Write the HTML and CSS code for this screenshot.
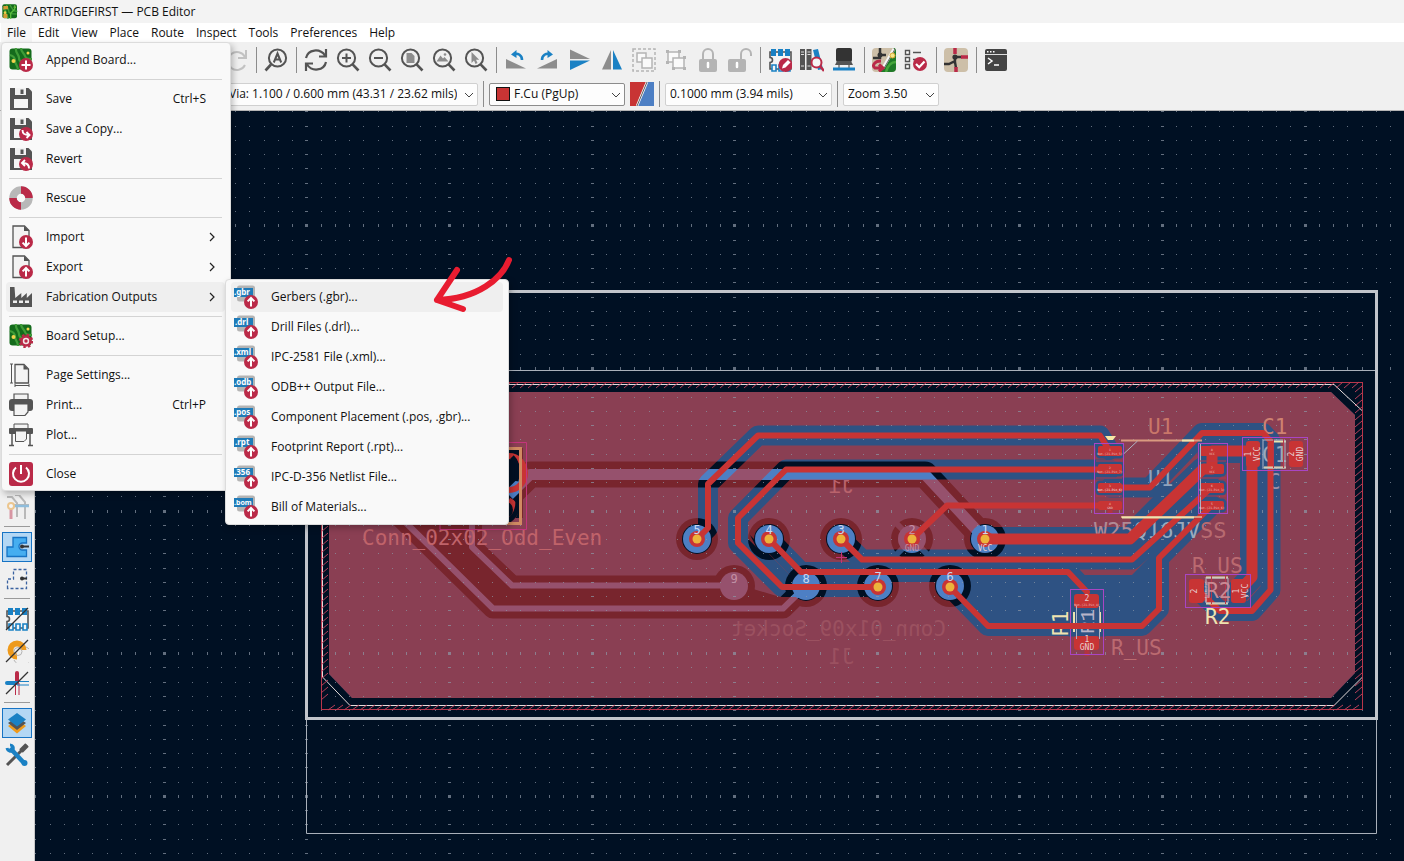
FILE: index.html
```html
<!DOCTYPE html>
<html lang="en">
<head>
<meta charset="utf-8">
<title>CARTRIDGEFIRST — PCB Editor</title>
<link rel="stylesheet" href="styles.css">
</head>
<body>
<svg class="defs" aria-hidden="true">
  <defs>
    <g id="lens"><circle cx="10.5" cy="10" r="8.6" fill="none" stroke="#545454" stroke-width="2"/><path d="M16.6 16.4 22.5 22.5" stroke="#545454" stroke-width="2.6" fill="none"/></g>
    <g id="up-badge"><circle cx="17" cy="17" r="7" fill="#ba2a48"/><path d="M17 21.4V13.4M13.6 16.4 17 13l3.4 3.4" fill="none" stroke="#fff" stroke-width="2"/></g>
    <g id="floppy"><path d="M1 1h18.500l3.500 3.500V23H1z" fill="#545454"/><path d="M6 1h11v7H6z" fill="#f2f2f2"/><path d="M11.500 2.500h3v4.500h-3z" fill="#545454"/><path d="M5 12h14v9H5z" fill="#f5f5f5"/></g>
    <g id="sheet"><path d="M4 1h11.500L20 5.500V22.500H4z" fill="#f3f3f3" stroke="#545454" stroke-width="1.300"/><path d="M15 1v5h5.500z" fill="#545454"/></g>
    <g id="board"><rect x="0.500" y="0.500" width="22" height="21" rx="3" fill="#146b1c"/><path d="M7 0c-1 5 3 6 3 10s3 5 12 5M12 0c0 4 3 5 4 8s3 3 7 3M1 7c4 1 5 3 5 6s3 5 3 9" fill="none" stroke="#3f9c38" stroke-width="2.200"/><circle cx="4.500" cy="13" r="2" fill="#f2d24c"/><circle cx="19" cy="5" r="1.500" fill="#f2d24c"/></g>
    <g id="tagback"><rect x="3" y="0.500" width="18" height="16" rx="2.500" fill="#b4b4b4"/><rect x="0" y="3" width="19" height="9" fill="#1f7bb8"/></g>
    <g id="chips" stroke-width="1.600"><path d="M2 4V9.500a2.500 2.500 0 0 1 0 5V21H23V4z" fill="#f5f5f5" stroke="#545454"/><path d="M3 1h5v7H3zM10 1h5v7h-5zM17 1h5v7h-5z" fill="#1a81c4"/><path d="M4 17h4v6H4zM11 17h4v6h-4zM18 17h4v6h-4z" fill="#f5f5f5" stroke="#1a81c4"/></g>
  </defs>
</svg>

<header class="titlebar">
  <svg class="app-icon" viewBox="0 0 24 24"><use href="#board"/><rect x="2" y="3" width="7" height="5" fill="#d39a35"/><rect x="2" y="15" width="6" height="6" fill="#d39a35"/><path d="M13 22V14l6-6V2" fill="none" stroke="#5abf3e" stroke-width="2"/></svg>
  <span>CARTRIDGEFIRST — PCB Editor</span>
</header>

<nav class="menubar">
  <button class="open">File</button><button>Edit</button><button>View</button><button>Place</button><button>Route</button><button>Inspect</button><button>Tools</button><button>Preferences</button><button>Help</button>

  <ul class="menu file-menu">
    <li><button><svg viewBox="0 0 24 24"><use href="#board"/><circle cx="17" cy="17" r="7" fill="#ba2a48"/><path d="M17 12.500v9M12.500 17h9" stroke="#fff" stroke-width="2"/></svg><span>Append Board...</span></button></li>
    <li class="rule"></li>
    <li><button><svg viewBox="0 0 24 24"><use href="#floppy"/></svg><span>Save</span><kbd>Ctrl+S</kbd></button></li>
    <li><button><svg viewBox="0 0 24 24"><use href="#floppy"/><circle cx="17" cy="17" r="7" fill="#ba2a48"/><path d="M13.500 13c0 4 2 5 6.500 5M17.500 15l3 3-3 3" fill="none" stroke="#fff" stroke-width="1.900"/></svg><span>Save a Copy...</span></button></li>
    <li><button><svg viewBox="0 0 24 24"><use href="#floppy"/><circle cx="17" cy="17" r="7" fill="#ba2a48"/><path d="M20 21.500c0-4-2-5.500-6-5.500M16 13l-3 3 3 3" fill="none" stroke="#fff" stroke-width="1.900"/></svg><span>Revert</span></button></li>
    <li class="rule"></li>
    <li><button><svg viewBox="0 0 24 24"><circle cx="12" cy="12" r="8" fill="none" stroke="#b8b8b8" stroke-width="7.500"/><path d="M12 4a8 8 0 0 1 8 8M12 20a8 8 0 0 1-8-8" fill="none" stroke="#ba2a48" stroke-width="7.500"/></svg><span>Rescue</span></button></li>
    <li class="rule"></li>
    <li><button><svg viewBox="0 0 24 24"><use href="#sheet"/><circle cx="17" cy="17" r="7" fill="#ba2a48"/><path d="M17 12.600v8M13.600 17.600l3.400 3.400 3.400-3.400" fill="none" stroke="#fff" stroke-width="2"/></svg><span>Import</span><svg class="more" viewBox="0 0 8 10"><path d="M2 1l4 4-4 4"/></svg></button></li>
    <li><button><svg viewBox="0 0 24 24"><use href="#sheet"/><use href="#up-badge"/></svg><span>Export</span><svg class="more" viewBox="0 0 8 10"><path d="M2 1l4 4-4 4"/></svg></button></li>
    <li class="has-sub"><button class="active"><svg viewBox="0 0 24 24"><path d="M1 22V2h4.500l.8 11 6-5v5l5.500-5v5L23 8v14z" fill="#545454"/><path d="M4 15.500h4v2.500H4zM10 15.500h4v2.500h-4zM16 15.500h4v2.500h-4z" fill="#efefef"/></svg><span>Fabrication Outputs</span><svg class="more" viewBox="0 0 8 10"><path d="M2 1l4 4-4 4"/></svg></button>
      <ul class="menu sub-menu">
        <li><button class="active"><svg viewBox="0 0 24 24"><use href="#tagback"/><text x="0" y="10">.gbr</text><use href="#up-badge"/></svg><span>Gerbers (.gbr)...</span></button></li>
        <li><button><svg viewBox="0 0 24 24"><use href="#tagback"/><text x="1" y="10">.drl</text><use href="#up-badge"/></svg><span>Drill Files (.drl)...</span></button></li>
        <li><button><svg viewBox="0 0 24 24"><use href="#tagback"/><text x="0" y="10">.xml</text><use href="#up-badge"/></svg><span>IPC-2581 File (.xml)...</span></button></li>
        <li><button><svg viewBox="0 0 24 24"><use href="#tagback"/><text x="0" y="10">.odb</text><use href="#up-badge"/></svg><span>ODB++ Output File...</span></button></li>
        <li><button><svg viewBox="0 0 24 24"><use href="#tagback"/><text x="0" y="10">.pos</text><use href="#up-badge"/></svg><span>Component Placement (.pos, .gbr)...</span></button></li>
        <li><button><svg viewBox="0 0 24 24"><use href="#tagback"/><text x="1" y="10">.rpt</text><use href="#up-badge"/></svg><span>Footprint Report (.rpt)...</span></button></li>
        <li><button><svg viewBox="0 0 24 24"><use href="#tagback"/><text x="0" y="10">.356</text><use href="#up-badge"/></svg><span>IPC-D-356 Netlist File...</span></button></li>
        <li><button><svg viewBox="0 0 24 24"><use href="#tagback"/><text class="wide" x="0" y="10">.bom</text><use href="#up-badge"/></svg><span>Bill of Materials...</span></button></li>
      </ul>
      <svg class="arrow" viewBox="0 0 90 60"><path d="M81 4C74 22 50 43 9 44M29 14 9 44l26 9" fill="none" stroke="#e81c30" stroke-width="6" stroke-linecap="round" stroke-linejoin="round"/></svg>
    </li>
    <li class="rule"></li>
    <li><button><svg viewBox="0 0 24 24"><use href="#board"/><circle cx="17" cy="17" r="4.500" fill="#f3e5e5" stroke="#ba2a48" stroke-width="2.600"/><circle cx="17" cy="17" r="6.200" fill="none" stroke="#ba2a48" stroke-width="2" stroke-dasharray="2.500 2.370"/><circle cx="17" cy="17" r="1.700" fill="#ba2a48"/></svg><span>Board Setup...</span></button></li>
    <li class="rule"></li>
    <li><button><svg viewBox="0 0 24 24"><path d="M6 1.500h9L19.500 6v14H6z" fill="#f3f3f3" stroke="#545454" stroke-width="1.300"/><path d="M14.500 1.500V6.500h5z" fill="#545454"/><path d="M2.500 1v19M1 1h3M1 20h3M6 22.500h14M6 21v3M20 21v3" stroke="#545454" fill="none"/></svg><span>Page Settings...</span></button></li>
    <li><button><svg viewBox="0 0 24 24"><path d="M5 1h14v6H5z" fill="#f3f3f3" stroke="#545454" stroke-width="1.200"/><rect y="6" width="24" height="12" rx="3" fill="#545454"/><path d="M5 11h14v8l-3 3.500H5z" fill="#f3f3f3" stroke="#545454" stroke-width="1.200"/></svg><span>Print...</span><kbd>Ctrl+P</kbd></button></li>
    <li><button><svg viewBox="0 0 24 24"><path d="M5 1h14v6H5z" fill="#f3f3f3" stroke="#545454"/><rect y="5" width="24" height="6" rx="1" fill="#545454"/><path d="M3 10v12M21 10v12M0 22.500h5M19 22.500h5" stroke="#545454" stroke-width="1.500"/><path d="M6.500 8h11v8L15 18.500H6.500z" fill="#f3f3f3" stroke="#545454"/></svg><span>Plot...</span></button></li>
    <li class="rule"></li>
    <li><button><svg viewBox="0 0 24 24"><rect width="24" height="24" rx="3" fill="#ba2a48"/><path d="M7 5.500a8 8 0 1 0 10 0M12 3v9" fill="none" stroke="#fff" stroke-width="2"/></svg><span>Close</span></button></li>
  </ul>
</nav>

<div class="toolbars">
  <div class="toolbar">
    <button aria-label="Redo"><svg viewBox="0 0 24 24" fill="none" stroke="#c2c2c2" stroke-width="2"><path d="M22 2v8h-8M21 9A9 9 0 1 0 21 17"/></svg></button>
    <i></i>
    <button aria-label="Find"><svg viewBox="0 0 24 24"><circle cx="13.500" cy="10" r="8.600" fill="none" stroke="#545454" stroke-width="2"/><path d="M7 16.500 1.500 22.500" stroke="#545454" stroke-width="2.600"/><path d="M9.800 14.500 13.500 5.500l3.700 9M11 11.500h5" fill="none" stroke="#545454" stroke-width="2"/></svg></button>
    <i></i>
    <button aria-label="Refresh"><svg viewBox="0 0 24 24" fill="none" stroke="#545454" stroke-width="2.200"><path d="M2 10C4 1 16 0 21 7.500M22 1v7.500h-7M22 14c-2 9-14 10-19 2.500M2 23v-7.500h7"/></svg></button>
    <button aria-label="Zoom in"><svg viewBox="0 0 24 24"><use href="#lens"/><path d="M10.500 5.500v9M6 10h9" stroke="#545454" stroke-width="2"/></svg></button>
    <button aria-label="Zoom out"><svg viewBox="0 0 24 24"><use href="#lens"/><path d="M6 10h9" stroke="#545454" stroke-width="2"/></svg></button>
    <button aria-label="Zoom to page"><svg viewBox="0 0 24 24"><use href="#lens"/><path d="M6.500 5h5l3 3v7h-8z" fill="#8d8d8d"/></svg></button>
    <button aria-label="Zoom to objects"><svg viewBox="0 0 24 24"><use href="#lens"/><path d="M4.500 13.500 8.500 7.500l2.500 3 1.500-1.500 4 4.500z" fill="#8d8d8d"/><circle cx="13" cy="6.500" r="1.300" fill="#8d8d8d"/></svg></button>
    <button aria-label="Zoom to selection"><svg viewBox="0 0 24 24"><use href="#lens"/><path d="M7.500 4v11l2.500-2.500 1.500 3.500 2-1-1.500-3.200h3.200z" fill="#8d8d8d"/></svg></button>
    <i></i>
    <button aria-label="Rotate left"><svg viewBox="0 0 24 24"><path d="M2 11 22 20.500H2z" fill="#8d8d8d"/><path d="M18 12c0-5-4-7-8-6" fill="none" stroke="#1a81c4" stroke-width="2.600"/><path d="M7 6.500 12.500 2v8z" fill="#1a81c4"/></svg></button>
    <button aria-label="Rotate right"><svg viewBox="0 0 24 24"><path d="M21 11 1 20.500h20z" fill="#8d8d8d"/><path d="M6 12c0-5 4-7 8-6" fill="none" stroke="#1a81c4" stroke-width="2.600"/><path d="M17 6.500 11.500 2v8z" fill="#1a81c4"/></svg></button>
    <button aria-label="Flip vertically"><svg viewBox="0 0 24 24"><path d="M2 1.500 22 11H2z" fill="#8d8d8d"/><path d="M2 22 22 12.500H2z" fill="#1a81c4"/></svg></button>
    <button aria-label="Mirror horizontally"><svg viewBox="0 0 24 24"><path d="M11 2V21.500H2z" fill="#8d8d8d"/><path d="M13 2V21.500h9z" fill="#1a81c4"/></svg></button>
    <button aria-label="Group"><svg viewBox="0 0 24 24" fill="#fafafa" stroke="#b4b4b4" stroke-width="1.500"><rect x="1" y="1" width="22" height="22" fill="none" stroke-dasharray="3 2"/><rect x="5" y="5" width="9" height="9"/><rect x="10" y="10" width="10" height="10"/></svg></button>
    <button aria-label="Ungroup"><svg viewBox="0 0 24 24" fill="#fafafa" stroke="#b4b4b4" stroke-width="1.500"><rect x="4" y="4" width="11" height="10"/><rect x="9" y="10" width="11" height="10"/><path d="M2 2h3v3H2zM14 2h3v3h-3zM2 13h3v3H2zM19 8h3v3h-3zM8 19h3v3H8zM19 19h3v3h-3z" fill="#b4b4b4" stroke="none"/></svg></button>
    <button aria-label="Lock"><svg viewBox="0 0 24 24"><rect x="3" y="11" width="18" height="13" rx="2" fill="#b4b4b4"/><path d="M7 11V6a5 5 0 0 1 10 0v5" fill="none" stroke="#b4b4b4" stroke-width="2"/><path d="M12 15v4" stroke="#fff" stroke-width="2.500" stroke-linecap="round"/></svg></button>
    <button aria-label="Unlock"><svg viewBox="0 0 24 24"><rect x="0" y="11" width="18" height="13" rx="2" fill="#b4b4b4"/><path d="M13 11V6a5 5 0 0 1 10 0v2" fill="none" stroke="#b4b4b4" stroke-width="2"/><path d="M9 15v4" stroke="#fff" stroke-width="2.500" stroke-linecap="round"/></svg></button>
    <i></i>
    <button aria-label="Footprint editor"><svg viewBox="0 0 24 24"><use href="#chips"/><circle cx="17.500" cy="17" r="7" fill="#ba2a48"/><path d="M14 20.500l1-3.500 5-5 2.500 2.500-5 5z" fill="#fff"/></svg></button>
    <button aria-label="Footprint browser"><svg viewBox="0 0 24 24"><path d="M0 1h5v21H0zM6.500 1h5v21h-5z" fill="#545454"/><path d="M1 4h3M1 6.500h3M7.500 4h3M7.500 6.500h3M1 18h3M7.500 18h3" stroke="#ddd"/><path d="M13 2l5-1 5 20-5 1z" fill="#1a81c4"/><circle cx="16.500" cy="14.500" r="5" fill="#f5f5f5" stroke="#ba2a48" stroke-width="2"/><path d="M20 18l4 5" stroke="#ba2a48" stroke-width="2.500"/></svg></button>
    <button aria-label="3D viewer"><svg viewBox="0 0 24 24"><rect x="4" y="0" width="16" height="14" rx="2" fill="#333"/><path d="M5 13h14l2 4H3z" fill="#545454"/><path d="M7 17v3M17 17v3" stroke="#777" stroke-width="1.500"/><path d="M1 19.500h22v3H1z" fill="#1a81c4"/></svg></button>
    <i></i>
    <button aria-label="Update from schematic"><svg viewBox="0 0 24 24"><rect width="24" height="24" rx="4" fill="#cdbfa8"/><path d="M22 0q2 0 2 4v16q0 4-4 4H8z" fill="#1f7a28"/><path d="M8 0v10H1M8 7h6" stroke="#333" stroke-width="2.500" fill="none"/><circle cx="8" cy="7" r="2.500" fill="#333"/><path d="M14 24c2-8 6-10 10-10" fill="none" stroke="#46a63c" stroke-width="2.500"/><path d="M22 1 11 20" stroke="#f5f5f5" stroke-width="3"/><path d="M23 1 11 22" stroke="#444" stroke-width="0.800"/><circle cx="20.500" cy="7.500" r="2.500" fill="#f3e58a" stroke="#e0a82c"/><path d="M9 13C2 13 0 18 3 20h6M7 16.500l4 3.500-4 3.500" fill="none" stroke="#ba2a48" stroke-width="3"/></svg></button>
    <button aria-label="Design rules checker"><svg viewBox="0 0 24 24"><path d="M1.500 2.500h4v4h-4zM1.500 9.500h4v4h-4zM1.500 16.500h4v4h-4z" fill="#fff" stroke="#545454" stroke-width="1.400"/><path d="M9 4.500h8M9 11.500h5" stroke="#545454" stroke-width="1.500"/><circle cx="16" cy="16" r="7" fill="#ba2a48"/><path d="M12 16l3.200 3.200L20.500 13.500" fill="none" stroke="#fff" stroke-width="2.200"/></svg></button>
    <i></i>
    <button aria-label="Schematic editor"><svg viewBox="0 0 24 24"><rect width="24" height="24" rx="4" fill="#cdbfa8"/><path d="M11 9v7M11 9h7M0 16h5l6-3M11 14l1 6" stroke="#333" stroke-width="2.400" fill="none"/><path d="M17 9h7M11 0v6M12 19v5" stroke="#ba2a48" stroke-width="3.500"/><circle cx="11" cy="9" r="2.600" fill="#333"/></svg></button>
    <i></i>
    <button aria-label="Scripting console"><svg viewBox="0 0 24 24"><rect x="1" y="1" width="22" height="22" rx="2" fill="#444"/><path d="M1 6.500h22" stroke="#ddd"/><path d="M3 3.800h1.500M6 3.800h1.500M9 3.800h1.500" stroke="#fff" stroke-width="1.500"/><path d="M4 10l4 3-4 3M10 17h5" fill="none" stroke="#fff" stroke-width="1.500"/></svg></button>
  </div>
  <div class="toolbar fields">
    <label class="combo via"><select aria-label="Via size"><option>Via: 1.100 / 0.600 mm (43.31 / 23.62 mils)</option></select><svg viewBox="0 0 10 6"><path d="M1 1l4 4 4-4"/></svg></label>
    <i></i>
    <label class="combo layer"><b></b><select aria-label="Layer"><option>F.Cu (PgUp)</option></select><svg viewBox="0 0 10 6"><path d="M1 1l4 4 4-4"/></svg></label>
    <button aria-label="Layer pair"><svg viewBox="0 0 24 24"><path d="M0 0h24v24H0z" fill="#4d7fc4"/><path d="M0 0h17L7 24H0z" fill="#c83434"/><path d="M17 0 7 24" stroke="#fff" stroke-width="2.400"/><path d="M17 0 7 24" stroke="#333" stroke-width="0.800"/></svg></button>
    <i></i>
    <label class="combo grid-size"><select aria-label="Grid"><option>0.1000 mm (3.94 mils)</option></select><svg viewBox="0 0 10 6"><path d="M1 1l4 4 4-4"/></svg></label>
    <i></i>
    <label class="combo zoom"><select aria-label="Zoom"><option>Zoom 3.50</option></select><svg viewBox="0 0 10 6"><path d="M1 1l4 4 4-4"/></svg></label>
  </div>
</div>

<main class="workspace">
  <aside class="sidebar">
    <button aria-label="Net highlight"><svg viewBox="0 0 24 24" opacity="0.450" fill="none"><path d="M2 2h5l5 6v14M10 0h4l6 7v17M7 10h17" stroke="#777" stroke-width="2"/><path d="M6 12v12" stroke="#ba2a48" stroke-width="3"/><path d="M8 11h16" stroke="#1a81c4" stroke-width="2.500"/><circle cx="6" cy="11" r="3" fill="#fff" stroke="#e8941a" stroke-width="2"/></svg></button>
    <i></i>
    <button class="on" aria-label="Show filled zones"><svg viewBox="0 0 24 24"><path d="M2 21.500V12h6V2.500h13.500v5.500h-4a3.500 3.500 0 0 0 0 7h4v6.500z" fill="#46aef0" stroke="#1673c4" stroke-width="1.300"/><path d="M16 11.500h8" stroke="#333" stroke-width="2"/><circle cx="17" cy="11.500" r="2" fill="#333"/></svg></button>
    <button aria-label="Show zone outlines"><svg viewBox="0 0 24 24"><path d="M2.500 21.500V12h6V2.500h13v19z" fill="none" stroke="#3a62a0" stroke-width="1.300" stroke-dasharray="3 2"/><path d="M16 11.500h6" stroke="#333" stroke-width="2"/><circle cx="17" cy="11.500" r="2" fill="#333"/></svg></button>
    <i></i>
    <button aria-label="Sketch footprints"><svg viewBox="0 0 24 24"><use href="#chips"/><path d="M1 23 23 1" stroke="#333" stroke-width="1.200"/></svg></button>
    <button aria-label="Sketch vias"><svg viewBox="0 0 24 24" fill="none"><path d="M21 8a9.500 9.500 0 1 1-12 13" stroke="#b4b4b4"/><path d="M12 17.500a6.500 6.500 0 1 1 6.500-6.500" stroke="#ee9a1c" stroke-width="6"/><circle cx="13" cy="12.500" r="4" stroke="#b4b4b4"/><path d="M1 23 23 1" stroke="#333" stroke-width="1.200"/></svg></button>
    <button aria-label="Sketch tracks"><svg viewBox="0 0 24 24" fill="none"><path d="M12 2v10" stroke="#ba2a48" stroke-width="4" stroke-linecap="round"/><path d="M2 12h9" stroke="#1a81c4" stroke-width="4" stroke-linecap="round"/><path d="M10.500 12v12M14 12v12" stroke="#ba2a48"/><path d="M12 10.500h12M12 14h12" stroke="#1a81c4"/><path d="M1 23 23 1" stroke="#333" stroke-width="1.200"/></svg></button>
    <i></i>
    <button class="on" aria-label="Layers manager"><svg viewBox="0 0 24 24"><path d="M3 15l9-6 9 6-9 7.500z" fill="#ee9a1c"/><path d="M3 12l9-6 9 6-9 7z" fill="#545454"/><path d="M3 8.500 12 2l9 6.500-9 7z" fill="#1a81c4"/></svg></button>
    <button aria-label="Properties"><svg viewBox="0 0 24 24" fill="none"><path d="M22 2 2 22" stroke="#545454" stroke-width="3"/><path d="M16 8l6-6" stroke="#545454" stroke-width="5"/><path d="M5 5l14 15" stroke="#1a81c4" stroke-width="4.500"/><path d="M2 5c1 4 5 4 6 2s0-5-3-5" stroke="#1a81c4" stroke-width="3"/><circle cx="19.500" cy="20" r="3" fill="#1a81c4"/></svg></button>
  </aside>

  <svg class="board" viewBox="35 111 1369 750" preserveAspectRatio="xMinYMin slice" role="img" aria-label="PCB layout">
    <defs>
      <path id="f-thin" d="M697 539 708 528V484L758 435.500H1100L1109 450M878 587H782L738 543V518L786 469.500H1110M769 539 801 572H1068L1087 592M841 539 862 559.500H1132L1212 487M950 587 988 626H1142L1159 609V558L1212 505M1110 487.500H1150L1202 433H1263L1270.500 441V590L1252 611H1220L1200 592"/>
      <path id="f-gnd" d="M912 539 947 505.500H1110"/>
      <path id="f-thick" d="M985 539H1130L1203 469H1212V451H1252V577L1238 592"/>
      <path id="b-thin" d="M400 517 493 608.500H783L806 586M472 515V547L512 585.500H734"/>
      <path id="b-thick" d="M509 495 530 474.500H925L985 539"/>
      <g id="u1-pads"><rect x="1098" y="446" width="24" height="10" rx="2"/><rect x="1098" y="464" width="24" height="10" rx="2"/><rect x="1098" y="483" width="24" height="10" rx="2"/><rect x="1200" y="446" width="24" height="10" rx="2"/><rect x="1200" y="464" width="24" height="10" rx="2"/><rect x="1200" y="483" width="24" height="10" rx="2"/><rect x="1200" y="501" width="24" height="9" rx="2"/></g>
      <g id="rc-pads"><rect x="1098" y="501" width="24" height="9" rx="2"/><rect x="1246" y="441" width="14" height="26" rx="3"/><rect x="1289" y="441" width="14" height="26" rx="3"/><rect x="1074" y="594" width="25" height="14" rx="3"/><rect x="1074" y="636" width="25" height="14" rx="3"/><rect x="1189" y="579" width="15" height="24" rx="3"/><rect x="1231" y="579" width="15" height="24" rx="3"/></g>
      <path id="zone" d="M352 392H1331L1355 415V673L1331 698H352L329 674V415z"/>
      <mask id="front-cut" maskUnits="userSpaceOnUse" x="35" y="111" width="1369" height="750">
        <rect x="35" y="111" width="1369" height="750" fill="#fff"/>
        <g fill="none" stroke="#000" stroke-linejoin="round" stroke-linecap="round">
          <use href="#f-thin" stroke-width="20"/><use href="#f-thick" stroke-width="24"/>
        </g>
        <path d="M950 575H1132L1205 500V515L1166 555V612L1142 630H990L950 590zM1130 520 1165 485H1190L1140 545zM750 535 790 575H870V592H780z"/>
        <g stroke="#000" stroke-width="5"><use href="#u1-pads"/><path d="M1071 590h32v44h-32z"/></g>
        <g><circle cx="697" cy="539" r="15"/><circle cx="769" cy="539" r="15"/><circle cx="841" cy="539" r="15"/><circle cx="985" cy="539" r="15"/><circle cx="806" cy="586" r="15"/><circle cx="878" cy="586" r="15"/><circle cx="950" cy="586" r="15"/></g>
        <path d="M509 448h10v70h-10z"/>
      </mask>
      <mask id="back-cut" maskUnits="userSpaceOnUse" x="35" y="111" width="1369" height="750">
        <rect x="35" y="111" width="1369" height="750" fill="#fff"/>
        <g fill="none" stroke="#000" stroke-linejoin="round"><use href="#b-thin" stroke-width="20"/><use href="#b-thick" stroke-width="26"/></g>
        <path d="M400 515H472V547L512 585H740L790 600 783 608H493zM509 448h14v70h-14z"/>
        <g><circle cx="697" cy="539" r="21"/><circle cx="769" cy="539" r="21"/><circle cx="841" cy="539" r="21"/><circle cx="912" cy="539" r="21"/><circle cx="985" cy="539" r="21"/><circle cx="734" cy="586" r="21"/><circle cx="806" cy="586" r="21"/><circle cx="878" cy="586" r="21"/><circle cx="950" cy="586" r="21"/></g>
        <path d="M896 523 928 555M928 523 896 555" stroke="#fff" stroke-width="6"/>
      </mask>
    </defs>

    <rect x="35" y="111" width="3000" height="2000" fill="#001023"/>
    <g fill="#4d7fc4">
      <use href="#zone" mask="url(#back-cut)" opacity="0.600"/>
      <g fill="none" stroke="#4d7fc4" stroke-linejoin="round"><use href="#b-thin" stroke-width="6"/><use href="#b-thick" stroke-width="11"/></g>
      <circle cx="697" cy="539" r="14"/><circle cx="769" cy="539" r="14"/><circle cx="841" cy="539" r="14"/><circle cx="912" cy="539" r="14"/><circle cx="985" cy="539" r="14"/><circle cx="734" cy="586" r="14"/><circle cx="806" cy="586" r="14"/><circle cx="878" cy="586" r="14"/><circle cx="950" cy="586" r="14"/>
    </g>
    <use href="#zone" mask="url(#front-cut)" fill="#c83434" opacity="0.600"/>

    <g class="grid"><path id="grid-dots"/></g>

    <!-- sheet frame and board outline -->
    <path d="M306.500 370.500h1070v463h-1070z" fill="none" stroke="#a9b0ba"/>
    <rect x="306.500" y="291.500" width="1070" height="427" fill="none" stroke="#c2c5cb" stroke-width="3"/>
    <path d="M350 384.500H1334L1362.500 411V677L1334 705.500H350L322.500 677V411z" fill="none" stroke="#e4dcdc"/>
    <rect x="321.500" y="382.500" width="1041" height="327" fill="none" stroke="#b8364a"/>
    <path id="hatch" fill="none" stroke="#b8405a"/>

    <!-- silkscreen and fabrication labels under the tracks -->
    <g class="label">
      <text x="362" y="545" fill="#c0636a">Conn_02x02_Odd_Even</text>
      <g transform="matrix(-1 0 0 1 1684 0)"><text x="738" y="636" fill="#9b5160">Conn_01x09_Socket</text><text x="830" y="664" fill="#9b5160">J1</text><text x="830" y="493" class="light" fill="#b9636c">J1</text></g>
      <text x="1148" y="434" fill="#c97669">U1</text><text x="1148" y="486" fill="#8fa3bd">U1</text>
      <text x="1262" y="434" fill="#cf8271">C1</text><text x="1262" y="462" fill="#9aa9bd">C1</text><text x="1268" y="489" fill="#9c8fa6">C</text>
      <text class="part" x="1094" y="538"><tspan fill="#b08a96">W25</tspan><tspan fill="#9aaabd">Q16JV</tspan><tspan fill="#b86a70">SS</tspan></text>
      <text x="1192" y="573" fill="#bb6a70">R_US</text><text x="1111" y="655" fill="#bb6a70">R_US</text>
    </g>

    <g fill="none" stroke="#c83434" stroke-linejoin="round" stroke-linecap="round"><use href="#f-thin" stroke-width="6"/><use href="#f-gnd" stroke-width="6"/><use href="#f-thick" stroke-width="11"/></g>
    <g fill="#c83434"><use href="#u1-pads"/><use href="#rc-pads"/></g>
    <path d="M1087 650v6M1110 508v6" stroke="#b03440" stroke-width="5"/>

    <!-- silkscreen outlines -->
    <path d="M1121 440.500H1202M1121 517H1202" fill="none" stroke="#d99a80" stroke-width="2"/>
    <path d="M1182 440.500h12M1122 517.500h72M1274 441.500h12M1264 467.500h22M1206 577.500h22M1206 603.500h22M1074 612v20M1100 612v20" stroke="#ece3ae" stroke-width="2"/>
    <path d="M1105 436h11l-3 4h-5z" fill="#f6e7a5"/>
    <path d="M1123.500 452V514M1123.500 454l14-13M1200.500 443v71M1076.500 606v33M1099.500 606v33M1263 440h22v28h-22zM1206 578h22v25h-22z" fill="none" stroke="#aeb4c4"/>
    <g fill="none" stroke="#a945c4"><rect x="1094.500" y="443.500" width="29" height="70"/><rect x="1198.500" y="443.500" width="29" height="70"/><rect x="1242.500" y="437.500" width="65" height="33"/><rect x="1070.500" y="589.500" width="33" height="65"/><rect x="1185.500" y="574.500" width="65" height="33"/></g>
    <path d="M1096 461h26M1096 478h26M1096 496h26M1200 461h26M1200 478h26M1200 496h26M1273.500 439v29M1283.500 439v29M1211.500 576v28M1225.500 576v28" stroke="#b8364a"/>

    <!-- connector header beside the menu edge -->
    <path d="M509 456a16 17 0 0 1 0 34" stroke="#c83434" stroke-width="6" fill="none"/>
    <path d="M509 500a11 11 0 0 1 0 20" stroke="#c83434" stroke-width="5" fill="none"/>
    <path d="M512 457q8 8 4 24M508 521q10-6 10-20" stroke="#001023" stroke-width="5" fill="none"/>
    <path d="M500 448.500H520.500V523.500H500" stroke="#d08a62" stroke-width="3" fill="none"/>
    <path d="M440 442.500H526.500V529.500H440V510" stroke="#c4347c" fill="none"/>

    <g fill="#c83434"><circle cx="697" cy="539" r="8"/><circle cx="769" cy="539" r="8"/><circle cx="841" cy="539" r="8"/><circle cx="912" cy="539" r="8"/><circle cx="985" cy="539" r="8"/><circle cx="878" cy="587" r="8"/><circle cx="950" cy="587" r="8"/></g>
    <g fill="#ecb43c"><circle cx="697" cy="539" r="4.500"/><circle cx="769" cy="539" r="4.500"/><circle cx="841" cy="539" r="4.500"/><circle cx="912" cy="539" r="4.500"/><circle cx="985" cy="539" r="4.500"/><circle cx="878" cy="587" r="4.500"/><circle cx="950" cy="587" r="4.500"/></g>
    <path d="M836 557.500h11M841.500 552v11" stroke="#c4347c"/>

    <g class="pin" fill="#c9d8f2">
      <text x="697" y="534">5</text><text x="769" y="534">4</text><text x="841" y="534">3</text><text x="912" y="534" fill="#c58fa4">2</text><text x="985" y="534">1</text>
      <text x="734" y="583" fill="#c58fa4">9</text><text x="806" y="583">8</text><text x="878" y="581">7</text><text x="950" y="581">6</text>
    </g>
    <g class="net" fill="#e6cfd2">
      <text x="985" y="551">VCC</text><text x="912" y="551" fill="#c58fa4">GND</text><text x="1087" y="650">GND</text><text x="1087" y="642">1</text><text x="1087" y="601">2</text>
      <g transform="rotate(-90 1253 454)"><text x="1253" y="452">1</text><text x="1253" y="461">VCC</text></g>
      <g transform="rotate(-90 1296 454)"><text x="1296" y="452">2</text><text x="1296" y="461">GND</text></g>
      <g transform="rotate(-90 1196 591)"><text x="1196" y="592">2</text><text class="tiny" x="1196" y="602">Net-(J1-Pin)</text></g>
      <g transform="rotate(-90 1238 591)"><text x="1238" y="592">1</text><text x="1238" y="601">VCC</text></g>
    </g>
    <g class="tiny" fill="#edc4c4">
      <text x="1110" y="451">1</text><text x="1110" y="455">Net-(J1-Pin_5)</text><text x="1110" y="469">2</text><text x="1110" y="473">Net-(J1-Pin_7)</text><text x="1110" y="487">3</text><text x="1110" y="491" fill="#fff">Net-(J1-Pin_6)</text><text x="1110" y="505">4</text><text x="1110" y="509">GND</text>
      <text x="1212" y="451">8</text><text x="1212" y="455">VCC</text><text x="1212" y="469">7</text><text x="1212" y="473">VCC</text><text x="1212" y="487">6</text><text x="1212" y="491">Net-(J1-Pin_3)</text><text x="1212" y="505">5</text><text x="1212" y="509">Net-(J1-Pin_6)</text>
      <text x="1087" y="606">Net-(J1-Pin_4)</text>
    </g>
    <g class="label">
      <text x="1206" y="598" fill="#c98a94">R2</text>
      <text x="1205" y="624" fill="#efe3b0">R2</text>
      <text transform="translate(1068 636) rotate(-90)" fill="#efe3b0">R1</text>
    </g>
    <text class="label light" transform="translate(1094 634) rotate(-90)" fill="#b9b4c9">R1</text>
    <path d="M1050 626h54" stroke="#c83434" stroke-width="6"/>
  </svg>
</main>
<script src="board.js"></script>
</body>
</html>
```
FILE: styles.css
```css
* { box-sizing: border-box; }
html, body { height: 100%; }
body {
  margin: 0;
  display: flex;
  flex-direction: column;
  overflow: hidden;
  background: #f0f0f0;
  color: #111;
  font: 12px/16px "Open Sans", "Noto Sans", sans-serif;
}
button, select, kbd { font: inherit; color: inherit; }
button { margin: 0; padding: 0; border: 0; background: none; }
.defs { position: absolute; width: 0; height: 0; }

.titlebar {
  display: flex;
  align-items: center;
  gap: 6px;
  height: 23px;
  padding-left: 2px;
  background: #f3f3f3;
}
.app-icon { width: 16px; height: 16px; }

.menubar {
  position: relative;
  z-index: 2;
  display: flex;
  height: 19px;
  padding-left: 1px;
  background: #fff;
}
.menubar > button { padding: 0 6px; }
.menubar > .open { background: #f7f7f7; }

.menu {
  position: absolute;
  margin: 0;
  padding: 2px 6px;
  list-style: none;
  background: #f9f9f9;
  border: 1px solid #dcdcdc;
  border-radius: 4px;
  box-shadow: 2px 3px 6px rgba(0, 0, 0, 0.25);
}
.file-menu { top: 19px; left: 1px; width: 230px; padding: 2px 5px 1px 4px; }
.menu li { position: relative; }
.menu button {
  display: flex;
  align-items: center;
  width: 100%;
  height: 30px;
  padding: 0 9px 0 3px;
  text-align: left;
  border-radius: 4px;
}
.menu button > span { flex: 1; padding-left: 13px; white-space: nowrap; }
.menu button > svg { flex: none; width: 24px; height: 24px; }
.menu button > .more {
  width: 8px;
  height: 10px;
  fill: none;
  stroke: #222;
  stroke-width: 1.2px;
}
.menu kbd { padding-right: 10px; }
.menu .active { background: #efefef; }
.menu .rule { height: 1px; margin: 4px 3px; background: #d4d4d4; }
.menu text { font: bold 8px "Noto Sans", sans-serif; fill: #fff; }
.menu text.wide { font-size: 7px; }
.sub-menu { top: -3px; left: 219px; width: 284px; padding: 2px 5px; }
.arrow {
  position: absolute;
  top: -26px;
  left: 422px;
  width: 90px;
  height: 60px;
  pointer-events: none;
}

.toolbars {
  height: 69px;
  background: #f0f0f0;
  border-bottom: 1px solid #b5b5b5;
}
.toolbar {
  display: flex;
  align-items: center;
  gap: 8px;
  height: 36px;
  padding-left: 224px;
}
.toolbar svg, .sidebar svg { display: block; width: 24px; height: 24px; }
.toolbar i { width: 1px; height: 26px; margin-right: -1px; background: #8c8c8c; }
.fields { height: 32px; gap: 5px; }
.fields i { margin: 0; }
.combo { position: relative; display: block; height: 23px; }
.combo select {
  width: 100%;
  height: 100%;
  padding: 0 20px 0 4px;
  appearance: none;
  background: #fdfdfd;
  border: 1px solid #d0d0d0;
  border-radius: 2px;
}
.combo svg {
  position: absolute;
  top: 9px;
  right: 4px;
  width: 10px;
  height: 6px;
  fill: none;
  stroke: #444;
}
.via { width: 254px; }
.layer { width: 136px; }
.layer select { padding-left: 24px; border-color: #8c8c8c; }
.layer b {
  position: absolute;
  top: 4px;
  left: 7px;
  width: 14px;
  height: 14px;
  background: #c83434;
  border: 1px solid #111;
}
.grid-size { width: 167px; }
.zoom { width: 96px; }

.workspace { display: flex; flex: 1; min-height: 0; }
.sidebar {
  display: flex;
  flex-direction: column;
  gap: 2px;
  width: 35px;
  padding: 381px 2px 0;
  background: #f0f0f0;
  border-right: 1px solid #c8c8c8;
}
.sidebar button {
  display: grid;
  place-items: center;
  width: 30px;
  height: 30px;
  flex: none;
}
.sidebar i { flex: none; width: 26px; height: 1px; margin: 2px 2px 3px; background: #9a9a9a; }
.sidebar .on { background: #b3d7f4; border: 1px solid #1673c4; }

.board { flex: 1; min-width: 0; height: 100%; }
.grid path { fill: #8d98a6; fill-opacity: 0.7; shape-rendering: crispEdges; }
.label { font: 21px "DejaVu Sans Mono", monospace; }
.part { font-size: 22px; }
.light { font-family: "Liberation Mono", monospace; }
.pin { font: 12px "DejaVu Sans Mono", monospace; text-anchor: middle; }
.net { font: 8px "DejaVu Sans Mono", monospace; text-anchor: middle; }
.tiny { font: 3px "DejaVu Sans Mono", monospace; text-anchor: middle; }
```
FILE: board.js
```js
// Grid: one dot per step, wider and taller dots on every tenth column and row.
const STEP = 14.26;
const ORIGIN = { x: 306.4, y: 225.4 };
let dots = '';
for (let i = -19; i < 160; i++) {
  for (let j = -8; j < 100; j++) {
    const x = Math.round(ORIGIN.x + i * STEP);
    const y = Math.round(ORIGIN.y + j * STEP);
    const w = i % 10 === 0 ? 3 : 1;
    const h = j % 10 === 0 ? 3 : 1;
    dots += `M${x - (w >> 1)} ${y - (h >> 1)}h${w}v${h}h${-w}z`;
  }
}
document.getElementById('grid-dots').setAttribute('d', dots);

// Hatched border along the four sides of the copper zone.
let hatch = '';
for (let x = 328; x < 1356; x += 8) hatch += `M${x} 388l7 -6M${x} 710l7 -5`;
for (let y = 392; y < 706; y += 7) hatch += `M321 ${y}l7 -6M1355 ${y}l7 -6`;
document.getElementById('hatch').setAttribute('d', hatch);
```
